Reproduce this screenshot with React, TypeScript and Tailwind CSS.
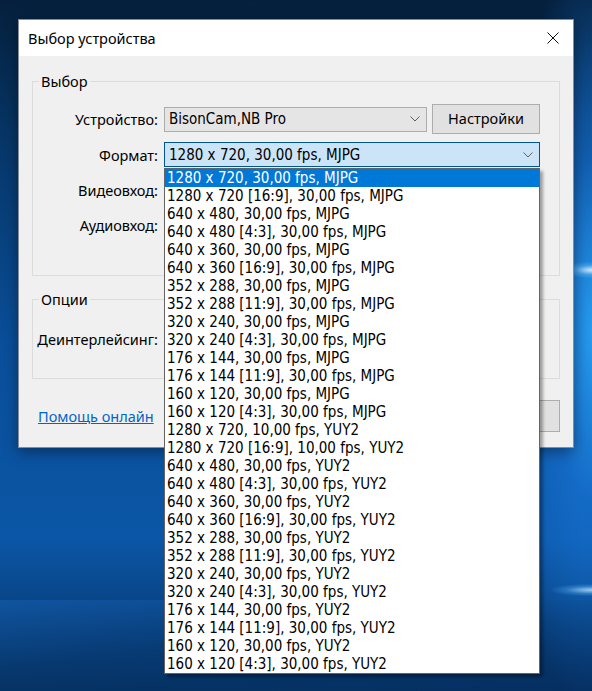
import React from "react";

const items = [
  "1280 x 720, 30,00 fps, MJPG",
  "1280 x 720 [16:9], 30,00 fps, MJPG",
  "640 x 480, 30,00 fps, MJPG",
  "640 x 480 [4:3], 30,00 fps, MJPG",
  "640 x 360, 30,00 fps, MJPG",
  "640 x 360 [16:9], 30,00 fps, MJPG",
  "352 x 288, 30,00 fps, MJPG",
  "352 x 288 [11:9], 30,00 fps, MJPG",
  "320 x 240, 30,00 fps, MJPG",
  "320 x 240 [4:3], 30,00 fps, MJPG",
  "176 x 144, 30,00 fps, MJPG",
  "176 x 144 [11:9], 30,00 fps, MJPG",
  "160 x 120, 30,00 fps, MJPG",
  "160 x 120 [4:3], 30,00 fps, MJPG",
  "1280 x 720, 10,00 fps, YUY2",
  "1280 x 720 [16:9], 10,00 fps, YUY2",
  "640 x 480, 30,00 fps, YUY2",
  "640 x 480 [4:3], 30,00 fps, YUY2",
  "640 x 360, 30,00 fps, YUY2",
  "640 x 360 [16:9], 30,00 fps, YUY2",
  "352 x 288, 30,00 fps, YUY2",
  "352 x 288 [11:9], 30,00 fps, YUY2",
  "320 x 240, 30,00 fps, YUY2",
  "320 x 240 [4:3], 30,00 fps, YUY2",
  "176 x 144, 30,00 fps, YUY2",
  "176 x 144 [11:9], 30,00 fps, YUY2",
  "160 x 120, 30,00 fps, YUY2",
  "160 x 120 [4:3], 30,00 fps, YUY2",
];

function Chevron() {
  return (
    <svg width="10" height="6" viewBox="0 0 10 6" className="shrink-0">
      <polyline points="0.5,0.5 5,5 9.5,0.5" fill="none" stroke="#606060" strokeWidth="1" />
    </svg>
  );
}

function Combo({ text, active }: { text?: string; active?: boolean }) {
  return (
    <div
      className={
        active
          ? "flex h-[25px] flex-1 items-center justify-between border border-[#005499] bg-[#cce4f7] pl-[4px] pr-[6px]"
          : "flex h-[25px] flex-1 items-center justify-between border border-[#adadad] bg-[#e5e5e5] pl-[4px] pr-[6px]"
      }
    >
      <span className="truncate text-[15px] leading-[20px] [font-family:'DejaVu_Sans_Condensed','Liberation_Sans',Arial,sans-serif]">
        {text}
      </span>
      <Chevron />
    </div>
  );
}

export default function App() {
  return (
    <div className="relative h-[691px] w-[592px] overflow-hidden bg-[linear-gradient(180deg,#05203d_0%,#07386b_22%,#0a4f9a_50%,#0b56a6_78%,#08407e_90%,#063466_100%)] font-['Segoe_UI','Noto_Sans',sans-serif] text-[14.5px] text-black">
      <div className="pointer-events-none absolute inset-0 bg-[radial-gradient(ellipse_90px_380px_at_100%_48%,rgba(40,160,245,0.95)_0%,rgba(25,120,220,0.6)_45%,rgba(10,80,160,0)_100%)]" />
      <div className="pointer-events-none absolute right-0 top-[262px] h-[16px] w-[30px] bg-[radial-gradient(ellipse_at_100%_50%,rgba(220,240,255,0.95)_0%,rgba(120,200,255,0.4)_40%,rgba(0,0,0,0)_75%)]" />
      <div className="pointer-events-none absolute right-0 top-[584px] h-[12px] w-[40px] bg-[radial-gradient(ellipse_at_100%_50%,rgba(200,235,255,0.8)_0%,rgba(100,190,255,0.3)_45%,rgba(0,0,0,0)_75%)]" />
      <div className="pointer-events-none absolute left-0 top-[600px] h-[91px] w-[592px] bg-[linear-gradient(172deg,rgba(30,110,200,0.35)_0%,rgba(10,60,120,0)_40%,rgba(4,40,90,0.45)_100%)]" />

      {/* Dialog window */}
      <div className="absolute left-[18px] top-[19px] flex h-[429px] w-[556px] flex-col border border-[rgba(50,60,80,0.55)] bg-[#f0f0f0] shadow-[0_4px_14px_rgba(0,0,0,0.4)]">
        <div className="flex h-[36px] shrink-0 items-center justify-between bg-white pl-[9px] pr-[14px]">
          <span className="leading-[20px]">Выбор устройства</span>
          <svg width="12" height="12" viewBox="0 0 12 12">
            <path d="M0.5 0.5 L11.5 11.5 M11.5 0.5 L0.5 11.5" stroke="#111" strokeWidth="1" />
          </svg>
        </div>

        <div className="relative flex flex-1 flex-col px-[13px]">
          {/* Group: Выбор */}
          <div className="relative mt-[25px] h-[195px] border border-[#dcdcdc]">
            <span className="absolute left-[6px] top-[-11px] bg-[#f0f0f0] px-[2px] leading-[20px]">Выбор</span>
            <div className="grid grid-cols-[125px_1fr] items-center gap-x-[6px] pr-[19px] pt-[22px]">
              <span className="text-right leading-[20px]">Устройство:</span>
              <div className="flex h-[30px] items-center gap-[5px]">
                <Combo text="BisonCam,NB Pro" />
                <div className="flex h-[30px] w-[108px] items-center justify-center border border-[#adadad] bg-[#e1e1e1]">
                  Настройки
                </div>
              </div>
              <span className="mt-[8px] text-right leading-[20px]">Формат:</span>
              <div className="mt-[8px] flex">
                <Combo text="1280 x 720, 30,00 fps, MJPG" active />
              </div>
              <span className="mt-[10px] text-right leading-[20px]">Видеовход:</span>
              <div className="mt-[10px] flex">
                <Combo />
              </div>
              <span className="mt-[10px] text-right leading-[20px]">Аудиовход:</span>
              <div className="mt-[10px] flex">
                <Combo />
              </div>
            </div>
          </div>

          {/* Group: Опции */}
          <div className="relative mt-[23px] h-[80px] border border-[#dcdcdc]">
            <span className="absolute left-[6px] top-[-11px] bg-[#f0f0f0] px-[2px] leading-[20px]">Опции</span>
            <div className="grid grid-cols-[125px_1fr] items-center gap-x-[6px] pr-[19px] pt-[26px]">
              <span className="text-right leading-[20px]">Деинтерлейсинг:</span>
              <div className="flex">
                <Combo />
              </div>
            </div>
          </div>

          {/* Bottom row */}
          <div className="mt-[21px] flex items-center justify-between">
            <span className="pl-[6px] leading-[20px] text-[#0066cc] underline">Помощь онлайн</span>
            <div className="flex h-[32px] w-[108px] items-center justify-center border border-[#adadad] bg-[#e1e1e1]">
              Закрыть
            </div>
          </div>

          {/* Open dropdown list */}
          <div className="absolute left-[145px] top-[112px] w-[376px] border border-[#646464] bg-white shadow-[3px_3px_3px_rgba(0,0,0,0.35)] [font-family:'DejaVu_Sans_Condensed','Liberation_Sans',Arial,sans-serif]">
            {items.map((t, i) => (
              <div
                key={i}
                className={
                  i === 0
                    ? "h-[18px] whitespace-nowrap bg-[#0078d7] pl-[2px] text-[15px] leading-[18px] text-white"
                    : "h-[18px] whitespace-nowrap pl-[2px] text-[15px] leading-[18px] text-black"
                }
              >
                {t}
              </div>
            ))}
          </div>
        </div>
      </div>
    </div>
  );
}
